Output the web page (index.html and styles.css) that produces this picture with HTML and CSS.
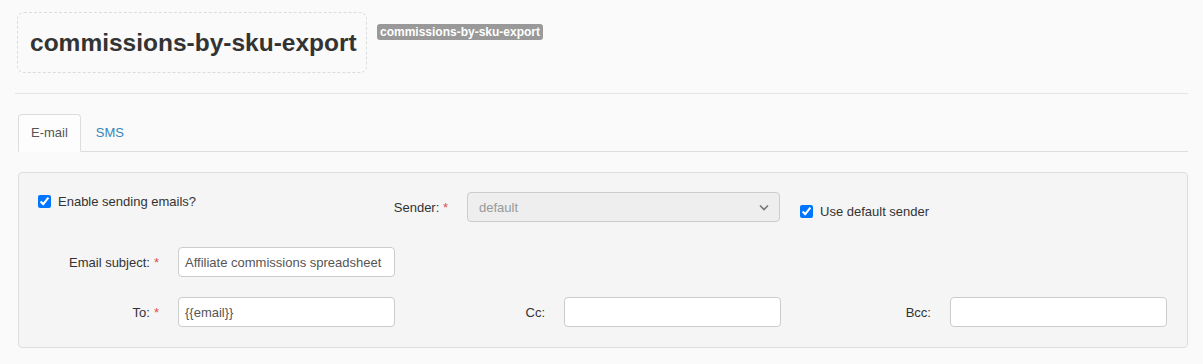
FILE: index.html
```html
<!DOCTYPE html>
<html>
<head>
<meta charset="utf-8">
<link rel="stylesheet" href="styles.css">
</head>
<body>
<div class="page">
  <div class="header">
    <div class="title-box"><h1 class="title">commissions-by-sku-export</h1></div>
    <span class="badge">commissions-by-sku-export</span>
  </div>
  <div class="rule"></div>
  <div class="tabs">
    <div class="tab active">E-mail</div>
    <div class="tab">SMS</div>
  </div>
  <div class="panel">
    <div class="row-top">
      <label class="check-cell"><input type="checkbox" checked><span>Enable sending emails?</span></label>
      <div class="sender-label">Sender: <span class="req">*</span></div>
      <div class="select"><span>default</span>
        <svg class="chev" width="10" height="7" viewBox="0 0 10 7"><path d="M1 1.5 L5 5.5 L9 1.5" fill="none" stroke="#777" stroke-width="1.6"/></svg>
      </div>
      <label class="check-cell2"><input type="checkbox" checked><span>Use default sender</span></label>
    </div>
    <div class="grid">
      <div class="lbl">Email subject: <span class="req">*</span></div>
      <div class="input">Affiliate commissions spreadsheet</div>
      <div></div><div></div><div></div><div></div>
      <div class="lbl">To: <span class="req">*</span></div>
      <div class="input">{{email}}</div>
      <div class="lbl">Cc:</div>
      <div class="input"></div>
      <div class="lbl">Bcc:</div>
      <div class="input"></div>
    </div>
  </div>
</div>
</body>
</html>
```
FILE: styles.css
```css
html, body {
  margin: 0;
  padding: 0;
  background: #fafafa;
  font-family: "Liberation Sans", Arial, sans-serif;
  font-size: 13px;
  color: #333;
}
.page {
  padding: 12px 15px 0 18px;
}
.header {
  display: flex;
  align-items: flex-start;
}
.title-box {
  width: 336px;
  height: 59px;
  margin-left: -1px;
  border: 1px dashed #dcdcdc;
  border-radius: 7px;
  display: flex;
  align-items: center;
  padding-left: 12px;
  box-sizing: content-box;
}
.title {
  margin: 0;
  font-size: 24.5px;
  font-weight: bold;
  color: #333;
}
.badge {
  margin: 12px 0 0 10px;
  background: #999;
  color: #fff;
  font-weight: bold;
  font-size: 12px;
  line-height: 16px;
  padding: 0 3px;
  border-radius: 3px;
}
.rule {
  margin: 20px 0 0 -3px;
  border-top: 1px solid #e5e5e5;
}
.tabs {
  margin-top: 20px;
  display: flex;
  border-bottom: 1px solid #ddd;
}
.tab {
  height: 36px;
  line-height: 36px;
  padding: 0 12px;
  margin-bottom: -1px;
  color: #3785b8;
  border: 1px solid transparent;
  border-radius: 4px 4px 0 0;
  margin-right: 2px;
}
.tab.active {
  color: #555;
  background: #fdfdfd;
  border-color: #ddd;
  border-bottom-color: #fdfdfd;
}
.panel {
  margin-top: 20px;
  background: #f5f5f5;
  border: 1px solid #ddd;
  border-radius: 4px;
  padding: 19px 0 20px 0;
}
.row-top {
  display: flex;
  align-items: center;
  height: 30px;
}
.check-cell {
  width: 338px;
  padding-left: 19px;
  align-self: flex-start;
  display: flex;
  align-items: center;
  height: 18px;
}
.check-cell input, .check-cell2 input {
  width: 13px;
  height: 13px;
  margin: 0 7px 0 0;
  accent-color: #0075ff;
}
.check-cell2 {
  padding-left: 20px;
  align-self: flex-start;
  margin-top: 10px;
  display: flex;
  align-items: center;
  height: 18px;
}
.sender-label {
  width: 72px;
  text-align: right;
  padding-right: 19px;
}
.req {
  color: #d9534f;
}
.select {
  height: 28px;
  border: 1px solid #ccc;
  border-radius: 4px;
  background: #eee;
  color: #999;
  display: flex;
  align-items: center;
  justify-content: space-between;
  padding: 0 6px 0 11px;
  box-sizing: content-box;
  width: 294px;
}
.chev {
  margin-right: 4px;
}
.grid {
  margin-top: 25px;
  display: grid;
  grid-template-columns: 159px 217px 169px 217px 169px 217px;
  grid-template-rows: 30px 30px;
  row-gap: 20px;
}
.lbl {
  text-align: right;
  padding-right: 19px;
  display: flex;
  align-items: center;
  justify-content: flex-end;
  gap: 4px;
}
.input {
  box-sizing: border-box;
  height: 30px;
  border: 1px solid #ccc;
  border-radius: 4px;
  background: #fff;
  color: #555;
  padding: 0 6px;
  display: flex;
  align-items: center;
  white-space: nowrap;
  overflow: hidden;
}
```
